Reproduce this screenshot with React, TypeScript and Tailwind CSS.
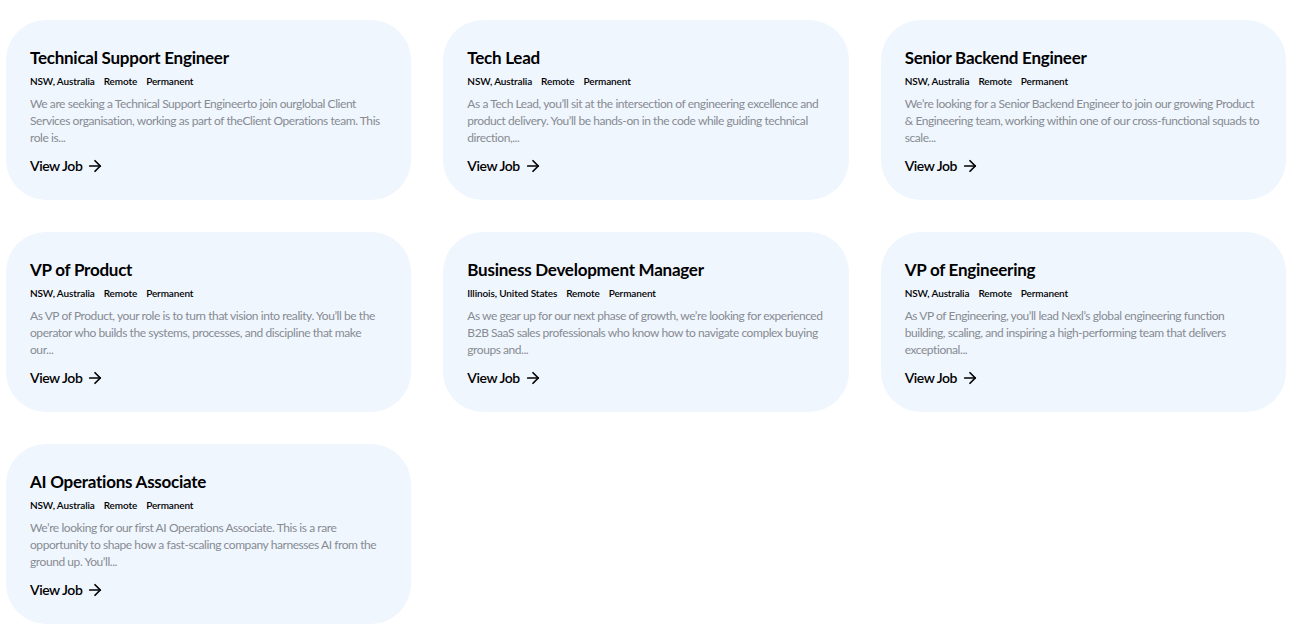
import React from "react";
import { ArrowRight } from "lucide-react";

type Job = { title: string; location: string; desc: string; tight?: boolean };

const jobs: Job[] = [
  {
    title: "Technical Support Engineer",
    location: "NSW, Australia",
    desc: "We are seeking a Technical Support Engineerto join ourglobal Client Services organisation, working as part of theClient Operations team. This role is...",
  },
  {
    title: "Tech Lead",
    location: "NSW, Australia",
    desc: "As a Tech Lead, you’ll sit at the intersection of engineering excellence and product delivery. You’ll be hands-on in the code while guiding technical direction,...",
  },
  {
    title: "Senior Backend Engineer",
    location: "NSW, Australia",
    desc: "We’re looking for a Senior Backend Engineer to join our growing Product & Engineering team, working within one of our cross-functional squads to scale...",
  },
  {
    title: "VP of Product",
    location: "NSW, Australia",
    desc: "As VP of Product, your role is to turn that vision into reality. You’ll be the operator who builds the systems, processes, and discipline that make our...",
  },
  {
    title: "Business Development Manager",
    location: "Illinois, United States",
    desc: "As we gear up for our next phase of growth, we’re looking for experienced B2B SaaS sales professionals who know how to navigate complex buying groups and...",
    tight: true,
  },
  {
    title: "VP of Engineering",
    location: "NSW, Australia",
    desc: "As VP of Engineering, you’ll lead Nexl’s global engineering function building, scaling, and inspiring a high-performing team that delivers exceptional...",
  },
  {
    title: "AI Operations Associate",
    location: "NSW, Australia",
    desc: "We’re looking for our first AI Operations Associate. This is a rare opportunity to shape how a fast-scaling company harnesses AI from the ground up. You’ll...",
  },
];

function Card({ job }: { job: Job }) {
  return (
    <div className="h-[180px] rounded-[40px] bg-[#f0f6fe] px-6 pt-6">
      <h3 className="text-[17px] leading-[28px] font-bold text-black tracking-[-0.25px]">
        {job.title}
      </h3>
      <div className="mt-[2px] flex gap-[9px] text-[10px] leading-[15px] font-semibold text-black tracking-[-0.12px]">
        <span>{job.location}</span>
        <span>Remote</span>
        <span>Permanent</span>
      </div>
      <p
        className={
          job.tight
            ? "mt-[6px] text-[12px] leading-[17px] text-[#878b92] tracking-[-0.45px]"
            : "mt-[6px] pr-[1px] text-[12px] leading-[17px] text-[#878b92] tracking-[-0.43px]"
        }
      >
        {job.desc}
      </p>
      <a className="mt-[10px] flex items-center gap-[4px] text-[14px] leading-[20px] font-semibold text-black tracking-[-0.45px]">
        View Job
        <ArrowRight size={18} strokeWidth={2.3} />
      </a>
    </div>
  );
}

export default function App() {
  return (
    <div
      className="bg-white min-h-[639px] pl-[6px] pt-[20px]"
      style={{ fontFamily: "Lato, 'Noto Sans', sans-serif" }}
    >
      <div className="grid w-[1280px] grid-cols-3 gap-8">
        {jobs.map((j) => (
          <Card key={j.title} job={j} />
        ))}
      </div>
    </div>
  );
}
